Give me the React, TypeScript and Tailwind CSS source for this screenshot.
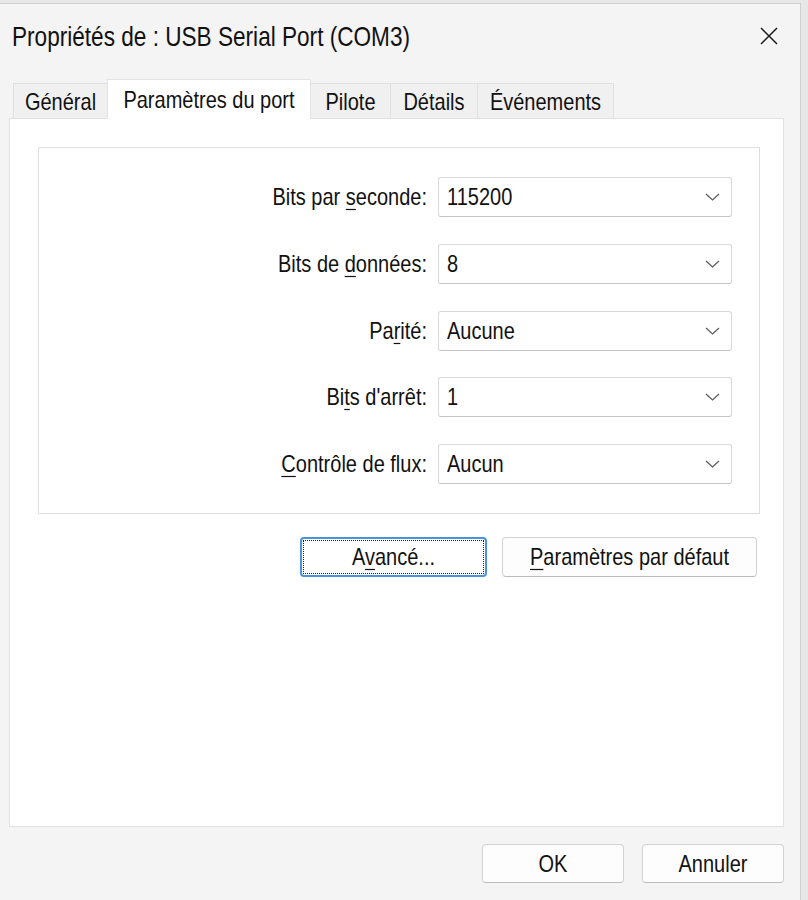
import React from "react";

const T = ({ children, className = "" }: { children: React.ReactNode; className?: string }) => (
  <span className={`inline-block scale-y-[1.19] whitespace-pre ${className}`}>{children}</span>
);

const U = ({ children }: { children: React.ReactNode }) => (
  <span className="underline decoration-1 underline-offset-[3px]">{children}</span>
);

const Chevron = () => (
  <svg width="15" height="8" viewBox="0 0 15 8" fill="none">
    <path d="M1 1 L7.5 7 L14 1" stroke="#5a5a5a" strokeWidth="1.2" />
  </svg>
);

const Combo = ({ value }: { value: string }) => (
  <div className="w-[294px] h-[40px] bg-white border border-[#d9d9d9] border-b-[#c4c4c4] rounded-[3px] flex items-center justify-between pl-[8px] pr-[11px]">
    <T className="text-[20px] leading-[24px]">{value}</T>
    <Chevron />
  </div>
);

const rows: { label: React.ReactNode; value: string }[] = [
  { label: <>Bits par <U>s</U>econde:</>, value: "115200" },
  { label: <>Bits de <U>d</U>onnées:</>, value: "8" },
  { label: <>Pa<U>r</U>ité:</>, value: "Aucune" },
  { label: <>Bi<U>t</U>s d'arrêt:</>, value: "1" },
  { label: <><U>C</U>ontrôle de flux:</>, value: "Aucun" },
];

export default function App() {
  return (
    <div className="w-[808px] h-[900px] overflow-hidden bg-[#e7e7e7] pt-[3px] pr-[7px] font-['Liberation_Sans',Arial,sans-serif] text-[#111]">
      <div className="h-[897px] bg-[#f4f4f4] border-t border-r border-[#cfcfcf] flex flex-col">
        {/* Title bar */}
        <div className="h-[76px] flex items-start justify-between pl-[12px] pr-[22px] pt-[20px]">
          <T className="text-[22.6px] leading-[28px] scale-y-[1.12]">Propriétés de : USB Serial Port (COM3)</T>
          <svg width="18" height="18" viewBox="0 0 18 18" className="mt-[3px]">
            <path d="M1 1 L17 17 M17 1 L1 17" stroke="#1a1a1a" strokeWidth="1.5" />
          </svg>
        </div>

        {/* Tabs */}
        <div className="h-[38px] flex items-end pl-[13px] relative z-10 text-[20px] leading-[24px]">
          <div className="w-[94px] h-[35px] bg-[#f0f0f0] border-t border-l border-[#e0e0e0] flex items-center justify-center pt-[1px]">
            <T>Général</T>
          </div>
          <div className="w-[204px] h-[40px] -mb-[1px] bg-white border-t border-l border-r border-[#e3e3e3] flex items-start justify-center pt-[8px]">
            <T>Paramètres du port</T>
          </div>
          <div className="w-[80px] h-[35px] bg-[#f0f0f0] border-t border-r border-[#e0e0e0] flex items-center justify-center pt-[1px]">
            <T>Pilote</T>
          </div>
          <div className="w-[87px] h-[35px] bg-[#f0f0f0] border-t border-r border-[#e0e0e0] flex items-center justify-center pt-[1px]">
            <T>Détails</T>
          </div>
          <div className="w-[136px] h-[35px] bg-[#f0f0f0] border-t border-r border-[#e0e0e0] flex items-center justify-center pt-[1px]">
            <T>Événements</T>
          </div>
        </div>

        {/* Panel */}
        <div className="ml-[9px] w-[775px] h-[709px] bg-white border border-[#e1e1e1] pt-[28px] pl-[28px] text-[20px] leading-[24px]">
          <div className="w-[722px] h-[367px] border border-[#dfdfdf] pt-[29px] flex flex-col gap-[26.75px]">
            {rows.map((r, i) => (
              <div key={i} className="flex items-center h-[40px]">
                <div className="w-[389px] text-right pr-[1px]">
                  <T>{r.label}</T>
                </div>
                <div className="ml-[10px]">
                  <Combo value={r.value} />
                </div>
              </div>
            ))}
          </div>

          <div className="w-[722px] mt-[23px] flex justify-end gap-[15px] pr-[3px]">
            <div className="w-[187px] h-[40px] rounded-[4px] border-2 border-[#4a94dc] bg-white p-[1px]">
              <div className="w-full h-full border border-dotted border-[#222] flex items-center justify-center">
                <T>A<U>v</U>ancé...</T>
              </div>
            </div>
            <div className="w-[255px] h-[40px] rounded-[4px] border border-[#d2d2d2] border-b-[#bdbdbd] bg-[#fdfdfd] flex items-center justify-center">
              <T><U>P</U>aramètres par défaut</T>
            </div>
          </div>
        </div>

        {/* Bottom buttons */}
        <div className="mt-[17px] flex justify-end gap-[18px] pr-[16px] text-[20px] leading-[24px]">
          <div className="w-[142px] h-[39px] rounded-[4px] border border-[#d2d2d2] border-b-[#bdbdbd] bg-[#fdfdfd] flex items-center justify-center">
            <T>OK</T>
          </div>
          <div className="w-[142px] h-[39px] rounded-[4px] border border-[#d2d2d2] border-b-[#bdbdbd] bg-[#fdfdfd] flex items-center justify-center">
            <T>Annuler</T>
          </div>
        </div>
      </div>
    </div>
  );
}
